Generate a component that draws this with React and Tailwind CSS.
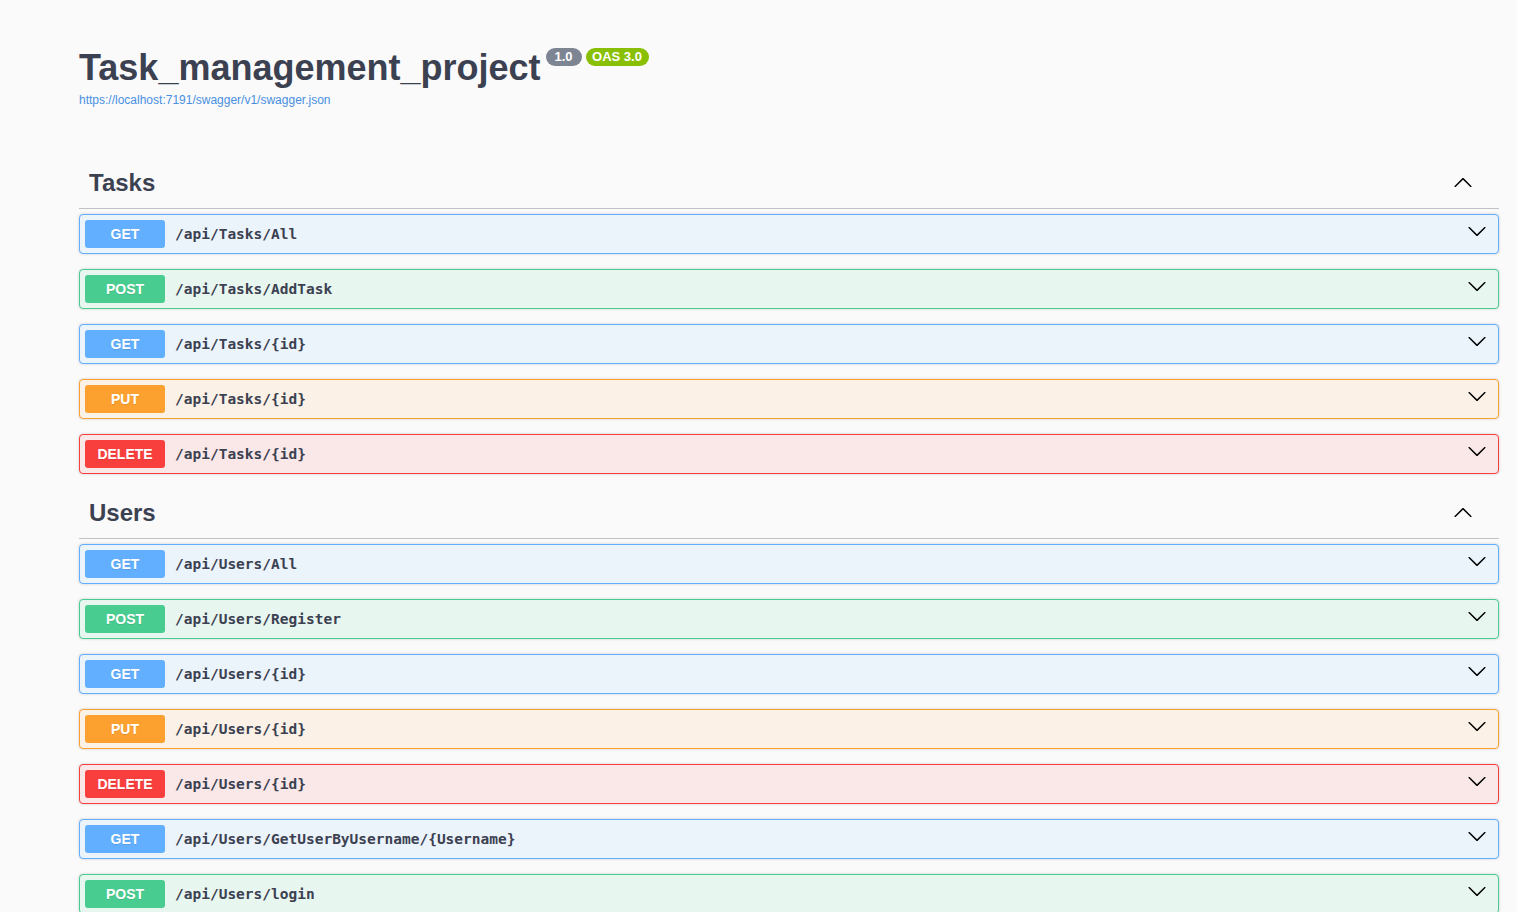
import React from 'react';

const METHODS = {
  GET: { row: 'bg-[#ebf3fb] border-[#61affe]', badge: 'bg-[#61affe]' },
  POST: { row: 'bg-[#e8f6f0] border-[#49cc90]', badge: 'bg-[#49cc90]' },
  PUT: { row: 'bg-[#fbf1e6] border-[#fca130]', badge: 'bg-[#fca130]' },
  DELETE: { row: 'bg-[#fae7e7] border-[#f93e3e]', badge: 'bg-[#f93e3e]' },
};

const sections = [
  {
    name: 'Tasks',
    ops: [
      ['GET', '/api/Tasks/All'],
      ['POST', '/api/Tasks/AddTask'],
      ['GET', '/api/Tasks/{id}'],
      ['PUT', '/api/Tasks/{id}'],
      ['DELETE', '/api/Tasks/{id}'],
    ],
  },
  {
    name: 'Users',
    ops: [
      ['GET', '/api/Users/All'],
      ['POST', '/api/Users/Register'],
      ['GET', '/api/Users/{id}'],
      ['PUT', '/api/Users/{id}'],
      ['DELETE', '/api/Users/{id}'],
      ['GET', '/api/Users/GetUserByUsername/{Username}'],
      ['POST', '/api/Users/login'],
    ],
  },
];

function Arrow({ up, className = '' }) {
  return (
    <svg width="20" height="20" viewBox="0 0 20 20" className={`${up ? 'rotate-180' : ''} ${className}`}>
      <path
        fill="#000"
        d="M17.418 6.109c.272-.268.709-.268.979 0s.271.701 0 .969l-7.908 7.83c-.27.268-.707.268-.979 0l-7.908-7.830c-.27-.268-.27-.701 0-.969.271-.268.709-.268.979 0L10 13.25l7.418-7.141z"
      />
    </svg>
  );
}

function Operation({ method, path }) {
  const m = METHODS[method];
  return (
    <div className={`mb-[15px] h-[40px] flex items-center border rounded-[4px] shadow-[0_0_3px_rgba(0,0,0,0.19)] pl-[5px] pr-[11px] ${m.row}`}>
      <span className={`w-[80px] h-[28px] flex items-center justify-center rounded-[3px] text-white text-[14px] font-bold [text-shadow:0_1px_0_rgba(0,0,0,0.1)] ${m.badge}`}>
        {method}
      </span>
      <span className="px-[10px] pt-[2px] text-[14.5px] font-bold text-[#3b4151] font-['DejaVu_Sans_Mono',monospace] flex-1">
        {path}
      </span>
      <Arrow className="mb-[6px]" />
    </div>
  );
}

export default function App() {
  return (
    <div className="h-[912px] overflow-hidden bg-[#fafafa] font-['Liberation_Sans',Arial,sans-serif] text-[#3b4151]">
      <div className="ml-[79px] mr-[18px]">
        <div className="pt-[47px]">
          <h2 className="flex items-start">
            <span className="text-[36px] font-bold leading-[42px]">Task_management_project</span>
            <span className="ml-[5px] mt-[1px] w-[36px] h-[18px] rounded-full bg-[#7d8492] text-white text-[13px] font-bold flex items-center justify-center">
              1.0
            </span>
            <span className="ml-[4px] mt-[1px] w-[63px] h-[18px] rounded-full bg-[#89bf04] text-white text-[13px] font-bold flex items-center justify-center">
              OAS 3.0
            </span>
          </h2>
          <a className="block text-[12px] leading-[16px] text-[#4990e2] mt-[3px]">
            https://localhost:7191/swagger/v1/swagger.json
          </a>
        </div>

        <div className="mt-[51px]">
          {sections.map((s) => (
            <div key={s.name}>
              <div className="h-[50px] mb-[5px] flex items-center border-b border-[rgba(59,65,81,0.3)] pl-[10px] pr-[26px]">
                <span className="flex-1 pb-[2px] text-[24px] font-bold">{s.name}</span>
                <Arrow up className="mb-[1px]" />
              </div>
              {s.ops.map(([method, path], i) => (
                <Operation key={i} method={method} path={path} />
              ))}
            </div>
          ))}
        </div>
      </div>
    </div>
  );
}
